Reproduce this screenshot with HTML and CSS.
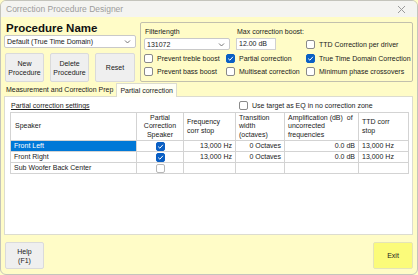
FILE: index.html
```html
<!DOCTYPE html>
<html>
<head>
<meta charset="utf-8">
<link rel="stylesheet" href="styles.css">
</head>
<body>
<div class="window">
  <div class="titlebar">
    <span class="title">Correction Procedure Designer</span>
    <svg class="close" width="9" height="9" viewBox="0 0 9 9"><path d="M1 1L8 8M8 1L1 8" stroke="#9a9a9a" stroke-width="1" fill="none"/></svg>
  </div>

  <div class="top">
    <div class="proc">
      <div class="proc-label">Procedure Name</div>
      <div class="combo proc-combo">
        <span>Default (True Time Domain)</span>
        <svg class="chev" width="7" height="5" viewBox="0 0 7 5"><path d="M1 1.5L3.5 4L6 1.5" stroke="#666" stroke-width="0.9" fill="none"/></svg>
      </div>
      <div class="btnrow">
        <div class="btn">New<br>Procedure</div>
        <div class="btn">Delete<br>Procedure</div>
        <div class="btn">Reset</div>
      </div>
    </div>

    <div class="group">
      <div class="row1">
        <div class="field filter">
          <div class="flabel">Filterlength</div>
          <div class="combo">
            <span>131072</span>
            <svg class="chev" width="7" height="5" viewBox="0 0 7 5"><path d="M1 1.5L3.5 4L6 1.5" stroke="#666" stroke-width="0.9" fill="none"/></svg>
          </div>
        </div>
        <div class="field maxb">
          <div class="flabel">Max correction boost:</div>
          <div class="input">12.00 dB</div>
        </div>
        <div class="cb ttd"><span class="box"></span>TTD Correction per driver</div>
      </div>
      <div class="cbgrid">
        <div class="cb"><span class="box"></span>Prevent treble boost</div>
        <div class="cb"><span class="box on"><svg width="9" height="9" viewBox="0 0 9 9"><path d="M2.2 4.6L3.9 6.2L6.9 2.8" stroke="#fff" stroke-width="1" fill="none"/></svg></span>Partial correction</div>
        <div class="cb"><span class="box on"><svg width="9" height="9" viewBox="0 0 9 9"><path d="M2.2 4.6L3.9 6.2L6.9 2.8" stroke="#fff" stroke-width="1" fill="none"/></svg></span>True Time Domain Correction</div>
        <div class="cb"><span class="box"></span>Prevent bass boost</div>
        <div class="cb"><span class="box"></span>Multiseat correction</div>
        <div class="cb"><span class="box"></span>Minimum phase crossovers</div>
      </div>
    </div>
  </div>

  <div class="tabs">
    <div class="tab">Measurement and Correction Prep</div>
    <div class="tab active">Partial correction</div>
  </div>

  <div class="panel">
    <div class="panel-head">
      <span class="settings">Partial correction settings</span>
      <div class="cb usetarget"><span class="box"></span>Use target as EQ in no correction zone</div>
    </div>
    <table class="grid">
      <colgroup>
        <col style="width:126px"><col style="width:47px"><col style="width:52px"><col style="width:49px"><col style="width:74px"><col style="width:50px">
      </colgroup>
      <thead>
        <tr>
          <th class="speaker-h">Speaker</th>
          <th class="center">Partial<br>Correction<br>Speaker</th>
          <th>Frequency<br>corr stop</th>
          <th>Transition<br>width<br>(octaves)</th>
          <th>Amplification (dB)&nbsp; of<br>uncorrected<br>frequencies</th>
          <th>TTD corr<br>stop</th>
        </tr>
      </thead>
      <tbody>
        <tr>
          <td class="sel">Front Left</td>
          <td class="center"><span class="box on"><svg width="9" height="9" viewBox="0 0 9 9"><path d="M2.2 4.6L3.9 6.2L6.9 2.8" stroke="#fff" stroke-width="1" fill="none"/></svg></span></td>
          <td class="num">13,000 Hz</td>
          <td class="num">0 Octaves</td>
          <td class="num">0.0 dB</td>
          <td>13,000 Hz</td>
        </tr>
        <tr>
          <td>Front Right</td>
          <td class="center"><span class="box on"><svg width="9" height="9" viewBox="0 0 9 9"><path d="M2.2 4.6L3.9 6.2L6.9 2.8" stroke="#fff" stroke-width="1" fill="none"/></svg></span></td>
          <td class="num">13,000 Hz</td>
          <td class="num">0 Octaves</td>
          <td class="num">0.0 dB</td>
          <td>13,000 Hz</td>
        </tr>
        <tr>
          <td>Sub Woofer Back Center</td>
          <td class="center"><span class="box light"></span></td>
          <td></td><td></td><td></td><td></td>
        </tr>
      </tbody>
    </table>
  </div>

  <div class="footer">
    <div class="btn help">Help<br>(F1)</div>
    <div class="btn exit">Exit</div>
  </div>
</div>
</body>
</html>
```

FILE: styles.css
```css
* { box-sizing: border-box; }
html, body { margin: 0; padding: 0; background: #fffcc7; }
body {
  font-family: "Liberation Sans", Arial, sans-serif;
  font-size: 7px;
  color: #1a1a1a;
}
.window {
  width: 418px;
  height: 275px;
  border: 1px solid #c4c4bc;
  border-radius: 6px;
  background: #fffcc7;
  overflow: hidden;
  display: flex;
  flex-direction: column;
}
.titlebar {
  height: 16px;
  flex: none;
  background: #f4f4f1;
  display: flex;
  align-items: center;
  justify-content: space-between;
  padding: 0 11px 0 5px;
}
.title { font-size: 8.5px; color: #9c9c9c; }
.close { display: block; }

.top {
  display: flex;
  padding: 4px 4px 0 3px;
  gap: 4px;
  flex: none;
}
.proc { width: 132px; }
.proc-label {
  font-size: 11.5px;
  font-weight: bold;
  height: 14px;
  line-height: 14px;
  padding-left: 2px;
  color: #111;
}
.combo {
  height: 13px;
  background: #fff;
  border: 1px solid #c9c9c9;
  border-radius: 2px;
  display: flex;
  align-items: center;
  justify-content: space-between;
  padding: 0 4px 0 2px;
  font-size: 7px;
}
.chev { display: block; }
.btnrow {
  display: flex;
  gap: 6px;
  margin-top: 5px;
  padding-left: 1px;
}
.btn {
  height: 29px;
  width: 39px;
  background: #efefef;
  border: 1px solid #dadada;
  border-radius: 2px;
  display: flex;
  align-items: center;
  justify-content: center;
  text-align: center;
  line-height: 9px;
  font-size: 7px;
}
.btnrow .btn:last-child { width: 40px; }

.group {
  margin-top: 1px;
  width: 273px;
  height: 60px;
  border: 1px solid #c2c0ad;
  border-radius: 2px;
  padding: 3px 3px 0 3px;
}
.row1 {
  display: flex;
  align-items: flex-end;
}
.flabel {
  line-height: 11px;
  height: 12px;
  padding-left: 1px;
  white-space: nowrap;
}
.filter { width: 86px; }
.filter .combo { height: 12px; }
.maxb { margin-left: 6px; width: 60px; }
.input {
  width: 40px;
  height: 12px;
  background: #fff;
  border: 1px solid #d0d0d0;
  padding-left: 2px;
  line-height: 10px;
}
.ttd { margin-left: 10px; }
.cbgrid {
  display: grid;
  grid-template-columns: 82px 80px 1fr;
  grid-auto-rows: 12px;
  row-gap: 1px;
  margin-top: 2px;
}
.cb {
  display: flex;
  align-items: center;
  height: 12px;
  white-space: nowrap;
}
.box {
  display: inline-block;
  width: 9px;
  height: 9px;
  border: 1px solid #8a8a8a;
  border-radius: 2px;
  background: #fff;
  margin-right: 4px;
  flex: none;
  position: relative;
}
.box.on {
  background: #0a5fc4;
  border-color: #0a5fc4;
}
.box.on svg { position: absolute; left: -1px; top: -1px; }
.box.light { border-color: #b8b8b8; }

.tabs {
  display: flex;
  margin: 1px 0 0 3px;
  height: 13px;
  flex: none;
  align-items: flex-end;
}
.tab {
  height: 12px;
  line-height: 12px;
  padding: 0 2px;
}
.tab.active {
  height: 14px;
  line-height: 13px;
  background: #fffff4;
  border: 1px solid #dcdcd0;
  border-bottom: none;
  padding: 0 3px;
  margin-left: 1px;
  margin-bottom: -1px;
  position: relative;
  z-index: 1;
}
.panel {
  flex: 1;
  margin: 0 4px 0 3px;
  background: #fff;
  border: 1px solid #dcdcd0;
  padding: 2px 5px 0 5px;
}
.panel-head {
  display: flex;
  align-items: center;
  height: 13px;
}
.settings {
  text-decoration: underline;
  margin-left: 1px;
  width: 228px;
}
.usetarget { height: 13px; }

.grid {
  border-collapse: collapse;
  table-layout: fixed;
  width: 398px;
  margin-top: 0px;
}
.grid th, .grid td {
  border: 1px solid #d3d3d3;
  font-weight: normal;
  font-size: 7px;
  padding: 0 3px;
  white-space: nowrap;
  overflow: hidden;
}
.grid th {
  height: 28px;
  text-align: left;
  line-height: 8.5px;
}
.grid th.speaker-h { padding-left: 4px; }
.grid td {
  height: 11px;
  line-height: 10px;
}
.grid .center { text-align: center; }
.grid .num { text-align: right; }
.grid td.sel { background: #0078d7; color: #fff; }
.grid td .box { margin: 1px 0 0 0; vertical-align: top; }

.footer {
  display: flex;
  justify-content: space-between;
  padding: 7px 4px 5px 4px;
  flex: none;
}
.footer .btn { height: 27px; width: 39px; }
.footer .exit {
  width: 40px;
  background: #fbfb7a;
  border-color: #e4e4b8;
}
```
